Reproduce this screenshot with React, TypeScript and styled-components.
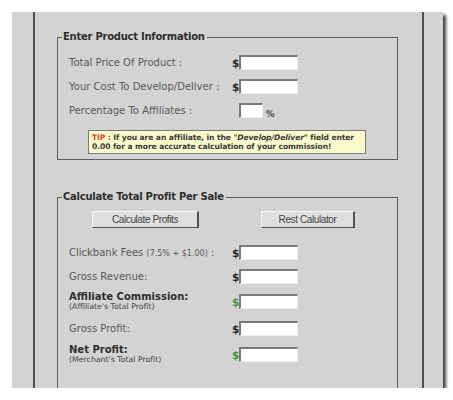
import styled, { createGlobalStyle } from "styled-components";

const GlobalStyle = createGlobalStyle`
  html, body {
    margin: 0;
    background: #ffffff;
  }
  body {
    font-family: "DejaVu Sans", Verdana, sans-serif;
  }
`;

const Field = ({ label, sub, bold, green, h = 24 }: FieldProps) => (
  <Row $h={h}>
    <Label>
      {bold ? <Strong>{label}</Strong> : label}
      {sub && <Sub>{sub}</Sub>}
    </Label>
    <Dollar $green={green}>$</Dollar>
    <Input $w={59} />
  </Row>
);

const App = () => {
  return (
    <Page>
      <GlobalStyle />
      <Panel>
        <Column>
          <Box>
            <Legend>Enter Product Information</Legend>
            <Field label="Total Price Of Product :" />
            <Field label="Your Cost To Develop/Deliver :" />
            <Row $h={24}>
              <Label>Percentage To Affiliates :</Label>
              <span />
              <PercentWrap>
                <Input $w={24} />
                <Percent>%</Percent>
              </PercentWrap>
            </Row>
            <Tip>
              <Red>TIP :</Red> If you are an affiliate, in the "<em>Develop/Deliver</em>" field enter
              <br />
              0.00 for a more accurate calculation of your commission!
            </Tip>
          </Box>

          <Box $open>
            <Legend>Calculate Total Profit Per Sale</Legend>
            <Buttons>
              <Button $w={107}>Calculate Profits</Button>
              <Button $w={94}>Rest Calulator</Button>
            </Buttons>
            <Rows>
              <Row $h={24}>
                <Label>
                  Clickbank Fees <Small>(7.5% + $1.00)</Small> :
                </Label>
                <Dollar>$</Dollar>
                <Input $w={59} />
              </Row>
              <Field label="Gross Revenue:" />
              <Field label="Affiliate Commission:" sub="(Affiliate's Total Profit)" bold green h={27} />
              <Field label="Gross Profit:" h={26} />
              <Field label="Net Profit:" sub="(Merchant's Total Profit)" bold green h={27} />
            </Rows>
          </Box>
        </Column>
      </Panel>
    </Page>
  );
};

const Page = styled.div`
  padding: 12px 0 0 12px;
`;

const Panel = styled.div`
  width: 431px;
  height: 376px;
  box-sizing: border-box;
  display: flex;
  padding: 0 19px 0 21px;
  background: #d3d3d3;
  box-shadow: 3px 3px 3px rgba(0, 0, 0, 0.75);
  overflow: hidden;
`;

const Column = styled.div`
  flex: 1;
  display: flex;
  flex-direction: column;
  padding: 19px 0 0 22px;
  border-left: 2px solid #505050;
  border-right: 2px solid #505050;
`;

const Box = styled.fieldset<{ $open?: boolean }>`
  width: 341px;
  box-sizing: border-box;
  margin: ${(p) => (p.$open ? "31px 0 0" : "0")};
  padding: 7px 0 5px;
  border: 1px solid #5e5e5e;
  border-bottom: ${(p) => (p.$open ? "none" : "1px solid #5e5e5e")};
  flex: ${(p) => (p.$open ? 1 : "none")};
  min-width: 0;
`;

const Legend = styled.legend`
  margin-left: 4px;
  padding: 0 2px 0 1px;
  font-size: 10px;
  line-height: 12px;
  letter-spacing: -0.25px;
  font-weight: bold;
  color: #2e2e2e;
`;

const Row = styled.div<{ $h: number }>`
  display: grid;
  grid-template-columns: 163px 7px auto;
  align-items: center;
  height: ${(p) => p.$h}px;
  padding-left: 11px;
`;

const Label = styled.div`
  font-size: 10px;
  color: #5a5a5a;
  white-space: nowrap;
`;

const Strong = styled.div`
  font-weight: bold;
  color: #2e2e2e;
  line-height: 11px;
`;

const Sub = styled.div`
  font-size: 7.8px;
  line-height: 10px;
  color: #444444;
`;

const Small = styled.span`
  font-size: 8px;
`;

const Dollar = styled.span<{ $green?: boolean }>`
  font-size: 10.5px;
  font-weight: bold;
  color: ${(p) => (p.$green ? "#3c9a3c" : "#2a2a2a")};
  text-align: right;
  margin-top: 1px;
`;

const Input = styled.div<{ $w: number }>`
  width: ${(p) => p.$w}px;
  height: 15px;
  box-sizing: border-box;
  background: #ffffff;
  border-top: 2px solid #7a7a7a;
  border-left: 2px solid #7a7a7a;
  border-right: 1px solid #eeeeee;
  border-bottom: 1px solid #eeeeee;
`;

const PercentWrap = styled.div`
  display: flex;
  align-items: flex-end;
  gap: 3px;
`;

const Percent = styled.span`
  font-size: 8.5px;
  font-weight: bold;
  color: #444444;
  line-height: 8px;
`;

const Tip = styled.div`
  width: 278px;
  box-sizing: border-box;
  margin: 8px 0 0 30px;
  padding: 2px 2px 2px 3px;
  border: 1px solid #7a7a7a;
  background: #fafacc;
  font-size: 7.6px;
  line-height: 9px;
  letter-spacing: -0.1px;
  font-weight: bold;
  color: #3a3a3a;
  white-space: nowrap;
  overflow: hidden;

  em {
    font-style: italic;
  }
`;

const Red = styled.span`
  color: #e23a1e;
`;

const Buttons = styled.div`
  display: flex;
  gap: 62px;
  margin: 1px 0 0 34px;
`;

const Button = styled.div<{ $w: number }>`
  width: ${(p) => p.$w}px;
  height: 17px;
  box-sizing: border-box;
  display: flex;
  align-items: center;
  justify-content: center;
  background: #dfdfdf;
  border-top: 1px solid #f6f6f6;
  border-left: 1px solid #f6f6f6;
  border-right: 2px solid #505050;
  border-bottom: 1px solid #505050;
  font-family: "Liberation Sans", Arial, sans-serif;
  font-size: 10px;
  letter-spacing: -0.4px;
  color: #444444;
`;

const Rows = styled.div`
  margin-top: 12px;
`;

interface FieldProps {
  label: string;
  sub?: string;
  bold?: boolean;
  green?: boolean;
  h?: number;
}

export default App;
